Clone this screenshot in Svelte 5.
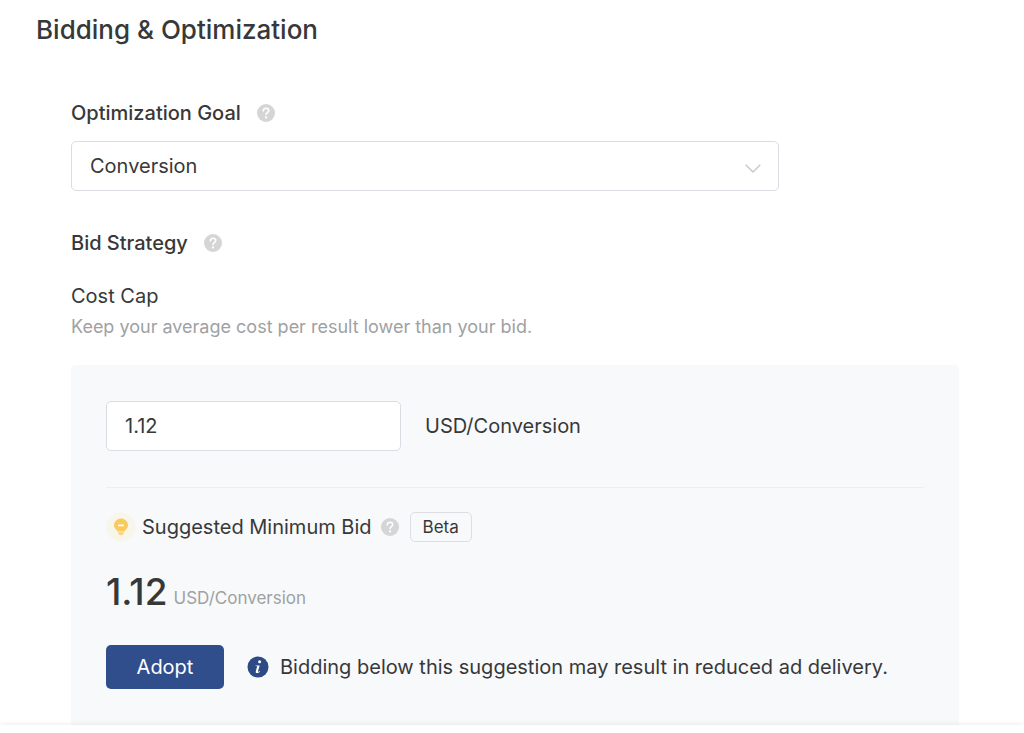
<script>
  let goal = $state('Conversion');
  let bid = $state('1.12');
  const suggested = '1.12';
  const unit = 'USD/Conversion';
</script>

{#snippet help(label)}
  <button class="help" type="button" aria-label={label}>
    <svg viewBox="0 0 18 18" width="18" height="18" aria-hidden="true">
      <circle cx="9" cy="9" r="9" fill="#d5d5d5" />
      <path d="M6.300 7C6.300 5.200 7.400 4.200 9 4.200s2.700 1 2.700 2.500c0 1.900-2.700 1.900-2.700 3.900" fill="none" stroke="#fff" stroke-width="1.600" stroke-linecap="round" />
      <circle cx="9" cy="13.400" r="1.150" fill="#fff" />
    </svg>
  </button>
{/snippet}

<div class="page">
  <main>
    <h1>Bidding &amp; Optimization</h1>

    <div class="content">
      <div class="heading">
        <label for="goal">Optimization Goal</label>
        {@render help('About optimization goal')}
      </div>
      <div class="select">
        <select id="goal" bind:value={goal}>
          <option>Conversion</option>
          <option>Click</option>
          <option>Reach</option>
        </select>
        <svg viewBox="0 0 16 9" width="16" height="9" aria-hidden="true">
          <path d="M.7.7 8 8 15.3.7" fill="none" stroke="#c4c6c9" stroke-width="1.3" />
        </svg>
      </div>

      <div class="heading strategy">
        <h2>Bid Strategy</h2>
        {@render help('About bid strategy')}
      </div>
      <h3>Cost Cap</h3>
      <p class="hint">Keep your average cost per result lower than your bid.</p>

      <section class="panel">
        <div class="bid">
          <input id="bid" type="text" inputmode="decimal" bind:value={bid} />
          <label for="bid">{unit}</label>
        </div>

        <div class="suggestion">
          <svg viewBox="0 0 30 30" width="30" height="30" aria-hidden="true">
            <circle cx="15" cy="15" r="14.5" fill="#f8f5ea" />
            <path d="M15 6.500a7 6.800 0 0 0-7 6.800c0 2.700 1.700 4.200 4 6.200h6c2.300-2 4-3.500 4-6.200a7 6.800 0 0 0-7-6.800z" fill="#f9cb5f" />
            <path d="M12.200 20h5.600v1.300l-1.600 2h-2.400l-1.600-2z" fill="#f9d68a" />
            <rect x="12" y="12.500" width="6" height="1.800" rx=".5" fill="#fff" />
          </svg>
          <span class="name">Suggested Minimum Bid</span>
          {@render help('About suggested minimum bid')}
          <span class="tag">Beta</span>
        </div>

        <div class="amount">
          <strong>{suggested}</strong>
          <span>{unit}</span>
        </div>

        <div class="action">
          <button class="adopt" type="button" onclick={() => (bid = suggested)}>Adopt</button>
          <p>
            <svg viewBox="0 0 22 22" width="22" height="22" aria-hidden="true">
              <circle cx="11" cy="11" r="10.5" fill="#2d4a87" />
              <circle cx="12.6" cy="5.700" r="1.5" fill="#fff" />
              <path d="M8.600 9.400h4.100l-1.700 5.800c-.2.800.4.800 1.700-.3l.4.500c-2 2.200-4.900 2.300-4.300-.2l1.300-4.600c.1-.4 0-.5-1.600-.6z" fill="#fff" />
            </svg>
            Bidding below this suggestion may result in reduced ad delivery.
          </p>
        </div>
      </section>
    </div>
  </main>
  <footer></footer>
</div>

<style>
  :global(body) {
    margin: 0;
    background: #fff;
  }
  .page {
    display: flex;
    flex-direction: column;
    min-height: 100vh;
    color: #37383a;
    font: 20px/28px Inter, 'Liberation Sans', sans-serif;
  }
  * {
    box-sizing: border-box;
  }
  main {
    padding: 14px 65px 0 36px;
  }
  h1, h2, h3, p {
    margin: 0;
  }
  h1 {
    font-size: 26px;
    line-height: 32px;
    font-weight: 500;
  }
  .content {
    padding: 53px 0 0 35px;
  }
  .heading {
    display: flex;
    align-items: center;
    gap: 16px;
  }
  .heading label, h2 {
    font-size: 20px;
    line-height: 28px;
    font-weight: 500;
  }
  .help {
    display: flex;
    padding: 0;
    border: 0;
    background: none;
  }
  .select {
    display: grid;
    align-items: center;
    max-width: 708px;
    margin-top: 14px;
  }
  select, .select svg {
    grid-area: 1 / 1;
  }
  .select svg {
    justify-self: end;
    margin-right: 18px;
    margin-top: 4px;
    pointer-events: none;
  }
  select, input {
    width: 100%;
    height: 50px;
    padding: 0 18px;
    border: 1px solid #d9dde3;
    border-radius: 5px;
    background: #fff;
    color: inherit;
    font: inherit;
    appearance: none;
  }
  .strategy {
    margin-top: 38px;
  }
  h3 {
    margin-top: 25px;
    font-size: 20px;
    line-height: 28px;
    font-weight: 400;
  }
  .hint {
    margin-top: 5px;
    color: #a0a1a3;
    font-size: 18px;
    line-height: 24px;
  }
  .panel {
    margin-top: 26px;
    padding: 36px 35px;
    border-radius: 5px 5px 0 0;
    background: #f7f9fb;
  }
  .bid {
    display: flex;
    align-items: center;
    gap: 24px;
    padding-bottom: 36px;
    border-bottom: 1px solid #eceef2;
  }
  .bid input {
    width: 295px;
  }
  .suggestion {
    display: flex;
    align-items: center;
    margin-top: 24px;
  }
  .name {
    margin: 0 9px 0 6px;
  }
  .tag {
    margin-left: 11px;
    padding: 0 12px;
    border: 1px solid #dcdee3;
    border-radius: 5px;
    font-size: 17px;
    line-height: 28px;
  }
  .amount {
    display: flex;
    align-items: flex-end;
    gap: 6px;
    margin-top: 28px;
  }
  .amount strong {
    font-size: 37px;
    line-height: 44px;
    font-weight: 500;
  }
  .amount span {
    color: #a0a1a3;
    font-size: 17px;
    line-height: 32px;
  }
  .action {
    display: flex;
    align-items: center;
    gap: 23px;
    margin-top: 31px;
  }
  .adopt {
    width: 118px;
    height: 44px;
    padding: 0;
    border: 0;
    border-radius: 5px;
    background: #304e8c;
    color: #fff;
    font: inherit;
  }
  .action p {
    display: flex;
    align-items: center;
    gap: 11px;
  }
  .action svg {
    flex: none;
  }
  footer {
    position: relative;
    flex: 1 0 8px;
    background: #fff;
    box-shadow: 0 -1px 5px rgba(0, 0, 0, 0.07);
  }
</style>
